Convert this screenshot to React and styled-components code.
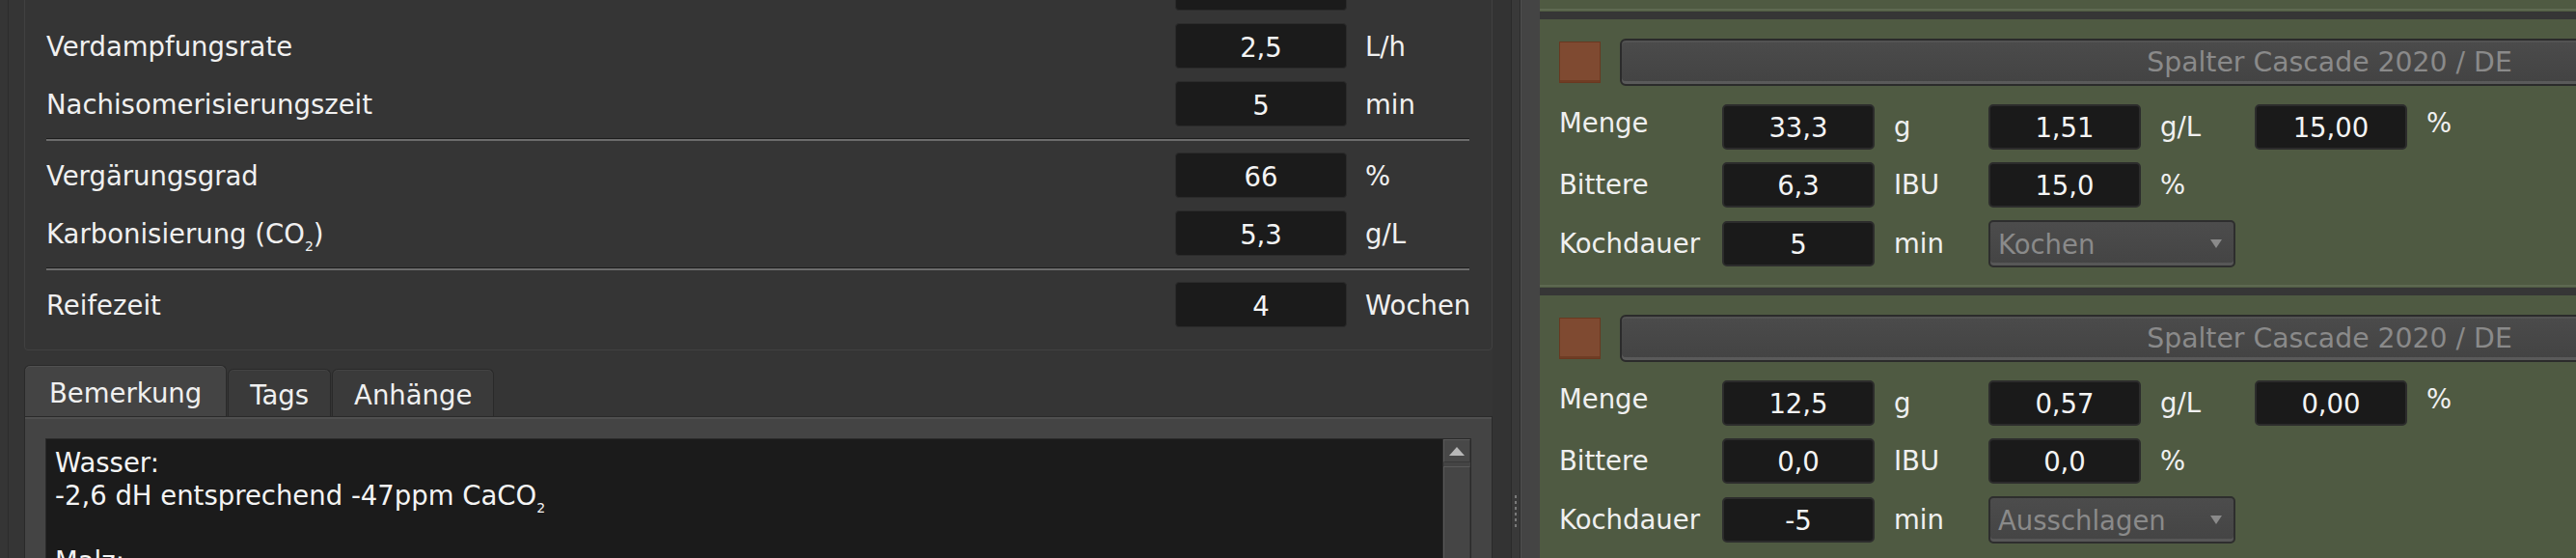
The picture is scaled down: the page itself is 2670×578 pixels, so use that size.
import React from 'react';
import styled, { createGlobalStyle } from 'styled-components';

const Global = createGlobalStyle`
  html, body { margin: 0; padding: 0; background: #353535; overflow: hidden; }
  body { font-family: "DejaVu Sans", "Noto Sans", sans-serif; font-size: 27.5px; color: #f0f0f0; }
  #root { width: 2670px; height: 578px; overflow: hidden; }
`;

const Page = styled.div`
  display: flex;
  align-items: flex-start;
  width: 2670px;
  height: 578px;
  overflow: hidden;
  background: #353535;
`;

/* ---------- left side ---------- */
const LeftPane = styled.div`
  flex: none;
  width: 1547px;
  height: 578px;
  box-sizing: border-box;
  padding-left: 8px;
  background: #353535;
`;

const LeftInner = styled.div`
  height: 100%;
  box-sizing: border-box;
  border-left: 1px solid #2c2c2c;
  padding-left: 16px;
  display: flex;
  flex-direction: column;
  & > * { flex-shrink: 0; }
`;

const GroupBox = styled.div`
  margin-top: -61px;
  border: 1px solid #414141;
  border-radius: 4px;
  padding: 24px 23px 23px 22px;
  display: flex;
  flex-direction: column;
  & > * { flex-shrink: 0; }
`;

const FormRow = styled.div`
  display: grid;
  grid-template-columns: 1fr 178px 108px;
  column-gap: 19px;
  align-items: center;
  height: 47px;
  & + & { margin-top: 13px; }
`;

const Label = styled.div`
  white-space: nowrap;
  line-height: 1;
  padding-top: ${p => p.$shift ? 3 : 0}px;
  ${p => p.$raise ? 'margin-bottom: 7px;' : ''}
`;

const ValueBox = styled.div`
  height: 47px;
  box-sizing: border-box;
  background: #1b1b1b;
  border: 1.5px solid #2b2b2b;
  border-radius: 4px;
  padding-top: ${p => p.$shift ? 3 : 0}px;
  display: flex;
  align-items: center;
  justify-content: center;
  color: #f4f4f4;
  white-space: nowrap;
`;

const Unit = styled.div`
  white-space: nowrap;
  line-height: 1;
  padding-top: ${p => p.$shift ? 3 : 0}px;
  ${p => p.$raise ? 'margin-bottom: 7px;' : ''}
`;

const Separator = styled.div`
  height: 1px;
  background: #1d1d1d;
  border-bottom: 2px solid #6c6c6c;
  margin: 12px 0;
`;

const Sub = styled.span`
  font-size: 14px;
  vertical-align: -8px;
  line-height: 0;
`;

const TabBar = styled.div`
  margin-top: 15px;
  display: flex;
  align-items: flex-end;
  gap: 1px;
`;

const Tab = styled.div`
  height: ${p => p.$active ? 53 : 49}px;
  box-sizing: border-box;
  padding: 4px ${p => p.$active ? 25 : 22}px 0;
  display: flex;
  align-items: center;
  background: ${p => p.$active ? '#444444' : '#3a3a3a'};
  border: 1px solid #2a2a2a;
  border-bottom: none;
  box-shadow: inset 0 1px 0 ${p => p.$active ? '#505050' : '#444444'};
  border-radius: 6px 6px 0 0;
  white-space: nowrap;
`;

const TabPane = styled.div`
  height: 200px;
  box-sizing: border-box;
  background: #444444;
  border: 1px solid #2a2a2a;
  box-shadow: inset 0 2px 0 #4f4f4f;
  padding: 22px 21px 0 21px;
`;

const TextEdit = styled.div`
  height: 100%;
  box-sizing: border-box;
  background: #1b1b1b;
  border: 1px solid #2a2a2a;
  display: flex;
`;

const TextArea = styled.div`
  flex: 1;
  padding: 7px 9px;
  line-height: 34px;
  white-space: pre-wrap;
  color: #f4f4f4;
`;

const VScroll = styled.div`
  flex: none;
  width: 28px;
  background: #444444;
  border-left: 1px solid #2c2c2c;
  display: flex;
  flex-direction: column;
  gap: 4px;
`;

const ScrollBtn = styled.div`
  flex: none;
  height: 24px;
  box-sizing: border-box;
  border: 1px solid #5a5a5a;
  border-right-color: #383838;
  border-bottom-color: #383838;
  background: #484848;
  display: flex;
  align-items: center;
  justify-content: center;
`;

const UpArrow = styled.div`
  width: 0;
  height: 0;
  border-left: 8px solid transparent;
  border-right: 8px solid transparent;
  border-bottom: 9px solid #b8b8b8;
`;

const ScrollTrack = styled.div`
  flex: 1;
  border: 1px solid #5a5a5a;
  border-right-color: #383838;
  background: #454545;
`;

/* ---------- splitter ---------- */
const LeftEdge = styled.div`
  flex: none;
  width: 19px;
  height: 578px;
  background: #333333;
`;

const Splitter = styled.div`
  flex: none;
  width: 10px;
  height: 578px;
  background: #393939;
  border-left: 1px solid #2a2a2a;
  border-right: 1px solid #2c2c2c;
  display: flex;
  flex-direction: column;
  align-items: flex-end;
  padding: 513px 3px 0 0;
  box-sizing: border-box;
  gap: 3px;
`;

const Dot = styled.div`
  flex: none;
  width: 2px;
  height: 3px;
  background: #7a7a7a;
`;

/* ---------- right side ---------- */
const RightFrame = styled.div`
  flex: none;
  height: 578px;
  display: flex;
`;

const FrameStrip = styled.div`
  flex: none;
  width: 20px;
  box-sizing: border-box;
  background: #444444;
  border-left: 1px solid #505050;
`;

const HopList = styled.div`
  flex: none;
  width: 1574px;
  background: #4f5a42;
  display: flex;
  flex-direction: column;
  & > * { flex-shrink: 0; }
`;

const TopStub = styled.div`
  height: 9px;
  border-bottom: 2px solid #5e6951;
  margin-bottom: 1px;
`;

const HopCard = styled.div`
  border-top: 8px solid #363636;
  border-bottom: 2px solid #5e6951;
  margin-bottom: 1px;
  padding: 20px;
  display: flex;
  flex-direction: column;
  gap: 19px;
  & > * { flex-shrink: 0; }
`;

const CardHeader = styled.div`
  display: flex;
  align-items: center;
  gap: 20px;
  height: 49px;
`;

const Swatch = styled.div`
  flex: none;
  width: 43px;
  height: 43px;
  box-sizing: border-box;
  background: #7f4a31;
  border: 1px solid #6a3820;
  box-shadow: inset 0 -2px 0 #6f3d24;
`;

const NameButton = styled.div`
  flex: 1;
  height: 49px;
  box-sizing: border-box;
  border: 2px solid #2b2b2b;
  border-radius: 6px;
  background: linear-gradient(#4b4b4b, #434343);
  box-shadow: inset 0 2px 0 #535353, inset 0 -3px 0 #5a5a5a;
  display: flex;
  align-items: center;
  justify-content: center;
  color: #8a8a8a;
  font-size: 28.3px;
  white-space: nowrap;
`;

const HopRows = styled.div`
  display: flex;
  flex-direction: column;
  gap: 13px;
  & > * { flex-shrink: 0; }
`;

const HopRow = styled.div`
  display: grid;
  grid-template-columns: 149px 158px 78px 158px 78px 158px auto;
  column-gap: 20px;
  align-items: center;
  height: 47px;
`;

const HopBox = styled(ValueBox)`
  background: #1a1a1a;
  border: 2px solid #2c2c2c;
  border-radius: 5px;
`;

const Combo = styled.div`
  grid-column: 4 / span 2;
  height: 49px;
  box-sizing: border-box;
  border: 2px solid #2e2e2e;
  border-radius: 5px;
  background: linear-gradient(#4c4c4c, #444444);
  box-shadow: inset 0 -3px 0 #575757;
  display: flex;
  align-items: center;
  justify-content: space-between;
  padding: 0 12px 0 8px;
  color: #8a8a8a;
  white-space: nowrap;
`;

const ComboArrow = styled.div`
  width: 0;
  height: 0;
  border-left: 6px solid transparent;
  border-right: 6px solid transparent;
  border-top: 9px solid #8a8a8a;
`;

const leftRows = [
  [
    { label: 'Kochdauer', value: '60', unit: 'min' },
    { label: 'Verdampfungsrate', value: '2,5', unit: 'L/h' },
    { label: 'Nachisomerisierungszeit', value: '5', unit: 'min' },
  ],
  [
    { label: 'Vergärungsgrad', value: '66', unit: '%' },
    { label: <>Karbonisierung (CO<Sub>2</Sub>)</>, value: '5,3', unit: 'g/L' },
  ],
  [
    { label: 'Reifezeit', value: '4', unit: 'Wochen' },
  ],
];

const hops = [
  { menge: '33,3', gl: '1,51', pct: '15,00', ibu: '6,3', ibuPct: '15,0', dauer: '5', zeit: 'Kochen' },
  { menge: '12,5', gl: '0,57', pct: '0,00', ibu: '0,0', ibuPct: '0,0', dauer: '-5', zeit: 'Ausschlagen' },
];

function HopItem({ h }) {
  return (
    <HopCard>
      <CardHeader>
        <Swatch />
        <NameButton>Spalter Cascade 2020 / DE</NameButton>
      </CardHeader>
      <HopRows>
        <HopRow>
          <Label $raise>Menge</Label>
          <HopBox>{h.menge}</HopBox>
          <Unit>g</Unit>
          <HopBox>{h.gl}</HopBox>
          <Unit>g/L</Unit>
          <HopBox>{h.pct}</HopBox>
          <Unit $raise>%</Unit>
        </HopRow>
        <HopRow>
          <Label>Bittere</Label>
          <HopBox>{h.ibu}</HopBox>
          <Unit>IBU</Unit>
          <HopBox>{h.ibuPct}</HopBox>
          <Unit>%</Unit>
        </HopRow>
        <HopRow>
          <Label>Kochdauer</Label>
          <HopBox>{h.dauer}</HopBox>
          <Unit>min</Unit>
          <Combo>
            <span>{h.zeit}</span>
            <ComboArrow />
          </Combo>
        </HopRow>
      </HopRows>
    </HopCard>
  );
}

export default function App() {
  return (
    <>
      <Global />
      <Page>
        <LeftPane>
          <LeftInner>
            <GroupBox>
              {leftRows.map((section, si) => (
                <React.Fragment key={si}>
                  {si > 0 && <Separator />}
                  <div>
                    {section.map((r, ri) => (
                      <FormRow key={ri}>
                        <Label $shift>{r.label}</Label>
                        <ValueBox $shift>{r.value}</ValueBox>
                        <Unit $shift>{r.unit}</Unit>
                      </FormRow>
                    ))}
                  </div>
                </React.Fragment>
              ))}
            </GroupBox>
            <TabBar>
              <Tab $active>Bemerkung</Tab>
              <Tab>Tags</Tab>
              <Tab>Anhänge</Tab>
            </TabBar>
            <TabPane>
              <TextEdit>
                <TextArea>
                  {'Wasser:\n-2,6 dH entsprechend -47ppm CaCO'}<Sub>2</Sub>{'\n\nMalz:'}
                </TextArea>
                <VScroll>
                  <ScrollBtn><UpArrow /></ScrollBtn>
                  <ScrollTrack />
                </VScroll>
              </TextEdit>
            </TabPane>
          </LeftInner>
        </LeftPane>
        <LeftEdge />
        <Splitter>
          {[0, 1, 2, 3, 4, 5].map(i => <Dot key={i} />)}
        </Splitter>
        <RightFrame>
          <FrameStrip />
          <HopList>
            <TopStub />
            {hops.map((h, i) => <HopItem key={i} h={h} />)}
          </HopList>
        </RightFrame>
      </Page>
    </>
  );
}
